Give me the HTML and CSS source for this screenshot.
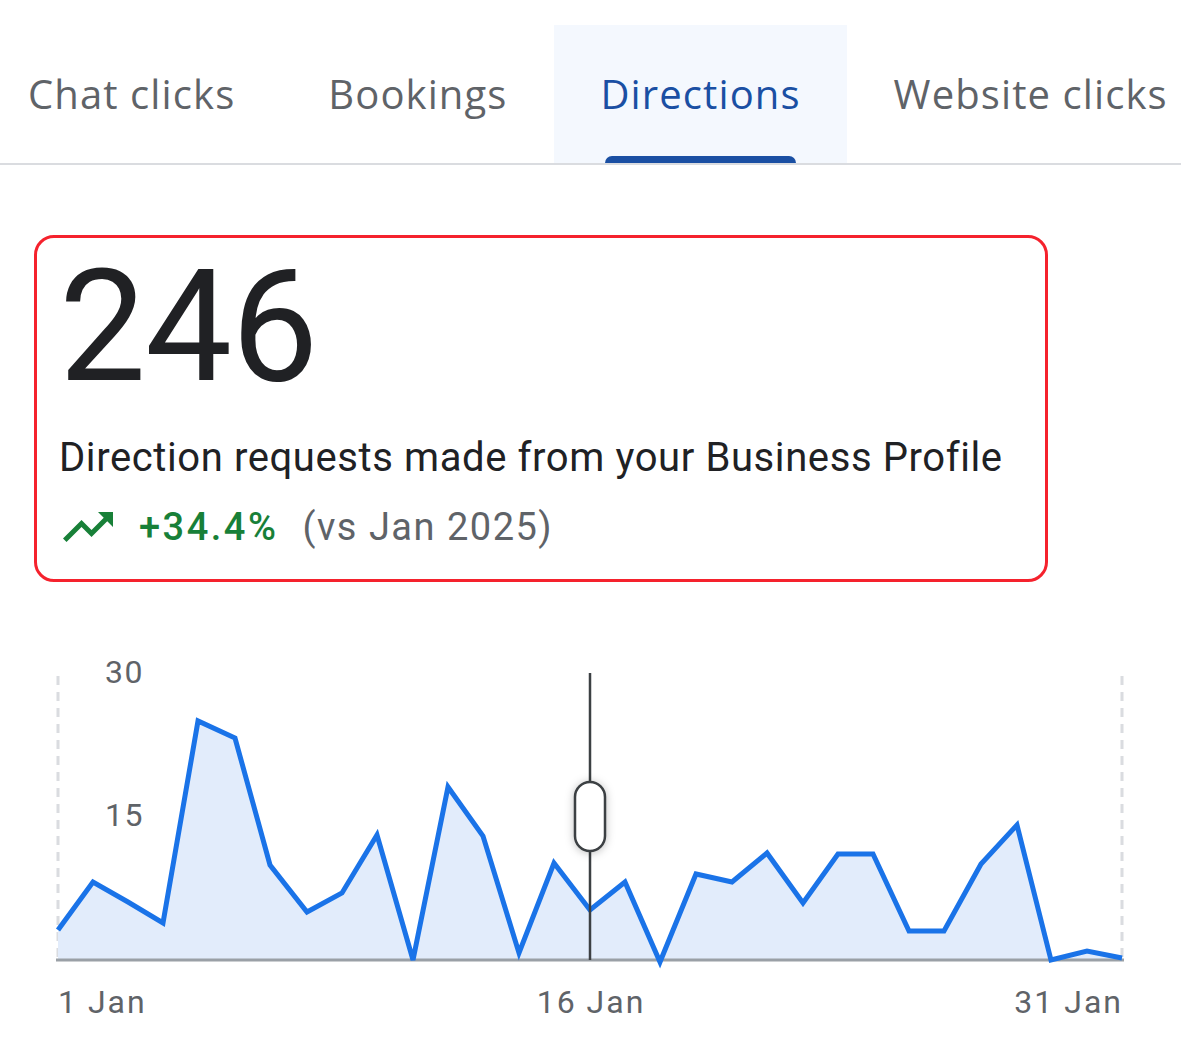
FILE: index.html
```html
<!DOCTYPE html>
<html lang="en">

<head>
    <meta charset="UTF-8">
    <meta name="viewport" content="width=device-width, initial-scale=1.0">
    <title>Directions</title>
    <link rel="stylesheet" href="styles.css">
</head>

<body>
    <div class="tabs">
        <div class="tab">Chat clicks</div>
        <div class="tab">Bookings</div>
        <div class="tab active">Directions</div>
        <div class="tab">Website clicks</div>
    </div>

    <div class="card">
        <div class="total">246</div>
        <p class="desc">Direction requests made from your Business Profile</p>
        <div class="trend">
            <svg class="trend-icon" viewBox="2 6 20 12" width="50" height="30">
                <path d="M16 6l2.29 2.29-4.88 4.88-4-4L2 16.59 3.41 18l6-6 4 4 6.3-6.29L22 12V6z" fill="currentColor"/>
            </svg>
            <span class="change">+34.4%</span>
            <span class="compare">(vs Jan 2025)</span>
        </div>
    </div>

    <div class="chart">
        <svg viewBox="0 640 1181 414" width="1181" height="414">
            <!-- side guides -->
            <line x1="58" y1="676" x2="58" y2="960" class="guide"/>
            <line x1="1122" y1="676" x2="1122" y2="960" class="guide"/>

            <polygon class="area" points="58,960 58,930 93,882 128,902 163,923 198,721 235,738 270,865 307,912 342,893 377,835 413,960 448,787 483,836 519,953 554,863 590,910 625,882 660,962 696,874 732,882 767,853 803,903 838,854 873,854 909,931 944,931 981,864 1017,825 1051,960 1087,951 1122,958 1122,960"/>
            <line x1="56" y1="960" x2="1124" y2="960" class="axis"/>
            <polyline class="line" points="58,930 93,882 128,902 163,923 198,721 235,738 270,865 307,912 342,893 377,835 413,960 448,787 483,836 519,953 554,863 590,910 625,882 660,962 696,874 732,882 767,853 803,903 838,854 873,854 909,931 944,931 981,864 1017,825 1051,960 1087,951 1122,958"/>

            <!-- hover cursor -->
            <line x1="590" y1="673" x2="590" y2="960" class="cursor"/>
            <rect x="575" y="782" width="30" height="69" rx="15" class="handle"/>

            <text x="144" y="683" class="y-label">30</text>
            <text x="144" y="826" class="y-label">15</text>
            <text x="58" y="1013" class="x-label">1 Jan</text>
            <text x="591" y="1013" class="x-label mid">16 Jan</text>
            <text x="1123" y="1013" class="x-label end">31 Jan</text>
        </svg>
    </div>
</body>

</html>
```
FILE: styles.css
```css
body {
    margin: 0;
    background-color: white;
    font-family: "Roboto", "Liberation Sans", sans-serif;
    color: #202124;
    overflow: hidden;
}

.tabs {
    display: flex;
    margin-top: 25px;
    margin-left: -19px;
    border-bottom: 2px solid #dadce0;
    height: 138px;
}

.tab {
    position: relative;
    display: flex;
    align-items: center;
    padding: 0 46px 2px 47px;
    font-family: "Open Sans", sans-serif;
    font-size: 40px;
    letter-spacing: 1.1px;
    color: #5f6368;
    white-space: nowrap;
}

.tab.active {
    background-color: #f4f8fe;
    color: #1a4fa3;
}

.tab.active::after {
    content: "";
    position: absolute;
    left: 51px;
    right: 51px;
    bottom: 0;
    height: 7px;
    background-color: #1a4fa3;
    border-radius: 7px 7px 0 0;
}

.card {
    margin: 70px 0 0 34px;
    width: 986px;
    height: 341px;
    border: 3px solid #f5222d;
    border-radius: 20px;
    padding: 0 0 0 22px;
}

.total {
    font-size: 155px;
    line-height: 1;
    margin-top: 12px;
    letter-spacing: -1px;
    color: #202124;
}

.desc {
    margin: 31px 0 0 0;
    font-size: 40px;
    line-height: 44px;
    letter-spacing: 0.6px;
}

.trend {
    display: flex;
    align-items: center;
    margin-top: 25px;
    font-size: 38px;
    line-height: 44px;
}

.trend-icon {
    color: #188038;
    margin: 0 26px 0 4px;
}

.change {
    color: #188038;
    font-weight: 500;
    letter-spacing: 2.5px;
    margin-right: 24px;
}

.compare {
    color: #5f6368;
    letter-spacing: 1.5px;
}

.chart {
    margin-top: 58px;
}

.chart svg {
    display: block;
}

.guide {
    stroke: #dadce0;
    stroke-width: 3;
    stroke-dasharray: 9 7;
}

.axis {
    stroke: #9aa0a6;
    stroke-width: 3;
}

.area {
    fill: #e2ecfb;
}

.line {
    fill: none;
    stroke: #1a73e8;
    stroke-width: 5;
    stroke-linejoin: miter;
}

.cursor {
    stroke: #3c4043;
    stroke-width: 2.5;
}

.handle {
    fill: white;
    stroke: #3c4043;
    stroke-width: 2.5;
    filter: drop-shadow(0 1px 4px rgba(0, 0, 0, 0.25));
}

.y-label,
.x-label {
    font-family: "Roboto", sans-serif;
    font-size: 32px;
    letter-spacing: 2px;
    fill: #5f6368;
}

.y-label {
    text-anchor: end;
    letter-spacing: 1.5px;
}

.x-label.mid {
    text-anchor: middle;
}

.x-label.end {
    text-anchor: end;
}
```
